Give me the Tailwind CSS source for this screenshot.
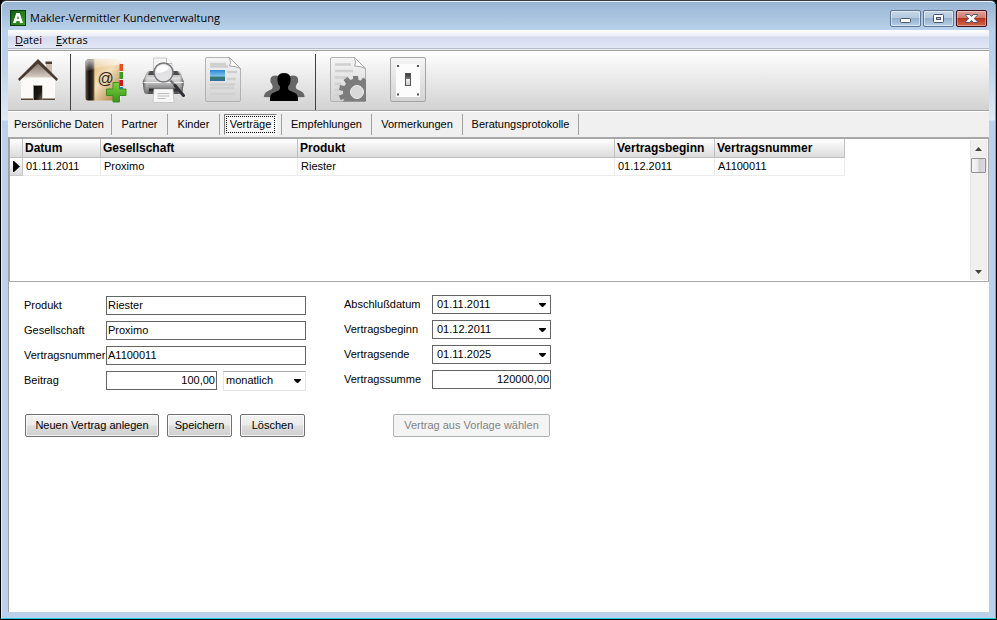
<!DOCTYPE html>
<html lang="de">
<head>
  <meta charset="UTF-8">
  <meta name="viewport" content="width=device-width, initial-scale=1">
  <title>Makler-Vermittler Kundenverwaltung</title>
  <script src="https://cdn.jsdelivr.net/npm/@tailwindcss/browser@4"></script>
</head>

<body class="bg-black font-['Liberation_Sans',Arial,sans-serif] text-[11px] leading-[13px] text-black">

  <div class="min-h-screen flex flex-col rounded-t-md border border-black border-t-[#3a3a44] bg-[linear-gradient(to_bottom,#98b4d2_0px,#b9d1ea_29px,#b9d1ea_60px,#dfeaf7_119px,#b9d1ea_120px)]">
    <div class="grow flex flex-col rounded-t-md border border-t-white/80 border-l-[#dcebf8] border-r-[#2bc8e8] border-b-[#2bc8e8] px-[6px] pb-[6px]">

      <!-- Titelleiste -->
      <header class="h-7 flex items-start justify-between pr-[2px]">
        <div class="flex items-center gap-1 pt-2 pl-[2px]">
          <svg class="size-4" viewBox="0 0 16 16">
            <defs>
              <linearGradient id="app" x1="0" y1="0" x2="1" y2="1"><stop offset="0" stop-color="#0d5c10"/><stop offset="1" stop-color="#3fa02a"/></linearGradient>
            </defs>
            <rect x=".5" y=".5" width="15" height="15" fill="url(#app)" stroke="#0a3d0c"/>
            <path d="M6.3 3h3.4L13 13h-3l-.5-2h-3L6 13H3zM8 5.5 7.1 9h1.8z" fill="#fff" fill-rule="evenodd"/>
          </svg>
          <h1 class="font-['Open_Sans','Noto_Sans',sans-serif] text-[11px] leading-4">Makler-Vermittler Kundenverwaltung</h1>
        </div>
        <div class="flex gap-[2px] pt-2">
          <button aria-label="Minimieren" class="w-[31px] h-[17px] flex items-center justify-center rounded-[2px] border border-[#5f7590] bg-[linear-gradient(to_bottom,#c5d6e8_0%,#b3c8de_48%,#94b1cd_50%,#b5cfe8_100%)] shadow-[inset_0_0_0_1px_rgba(255,255,255,.5)]">
            <svg class="w-[13px] h-[11px]" viewBox="0 0 13 11"><rect x="1.5" y="5.5" width="10" height="4" rx="1" fill="#fff" stroke="#4d5568"/></svg>
          </button>
          <button aria-label="Maximieren" class="w-[31px] h-[17px] flex items-center justify-center rounded-[2px] border border-[#5f7590] bg-[linear-gradient(to_bottom,#c5d6e8_0%,#b3c8de_48%,#94b1cd_50%,#b5cfe8_100%)] shadow-[inset_0_0_0_1px_rgba(255,255,255,.5)]">
            <svg class="w-[13px] h-[11px]" viewBox="0 0 13 11"><rect x="1.5" y="1.5" width="10" height="8" rx="1" fill="#fff" stroke="#4d5568"/><rect x="4.5" y="4.5" width="4" height="2" fill="#a8c0da" stroke="#4d5568"/></svg>
          </button>
          <button aria-label="Schließen" class="w-[31px] h-[17px] flex items-center justify-center rounded-[2px] border border-[#431019] bg-[linear-gradient(to_bottom,#e0a197_0%,#cf7a6c_48%,#b8341c_50%,#d0694a_100%)] shadow-[inset_0_0_0_1px_rgba(255,255,255,.35)]">
            <svg class="w-[13px] h-[11px]" viewBox="0 0 13 11"><path d="M.7 1.500h4l1.800 2 1.800-2h4v1L9.200 5.500l3.100 3v1h-4l-1.800-2-1.800 2h-4v-1l3.100-3-3.100-3z" fill="#fff" stroke="#4d5568"/></svg>
          </button>
        </div>
      </header>

      <!-- Menü -->
      <nav class="h-[19px] flex items-center gap-[14px] px-[7px] pt-px bg-[linear-gradient(to_bottom,#fff_0px,#e9edf7_6px,#d4dbee_7px,#e2e7f6_18px)] border-b border-[#b6bccc] font-['Open_Sans','Noto_Sans',sans-serif] leading-4">
        <a href="#datei"><span class="underline">D</span>atei</a>
        <a href="#extras"><span class="underline">E</span>xtras</a>
      </nav>
      <div class="h-[2px] bg-[#f0f0f0] border-b border-[#a0a0a0]"></div>

      <!-- Werkzeugleiste -->
      <div class="h-[60px] flex items-start pl-[7px] pt-[3px] border-b border-[#a0a0a0] bg-[linear-gradient(to_bottom,#fff_0%,#d2d2d2_100%)]">
        <button aria-label="Startseite">
          <svg class="w-[46px] h-[54px]" viewBox="15 54 46 54">
            <defs>
              <linearGradient id="roof" x1="0" y1="0" x2="0" y2="1"><stop offset="0" stop-color="#75655a"/><stop offset="1" stop-color="#d8cfc7"/></linearGradient>
              <linearGradient id="door" x1="0" y1="0" x2="1" y2="1"><stop offset="0" stop-color="#0c0906"/><stop offset=".6" stop-color="#1e1813"/><stop offset="1" stop-color="#6e655a"/></linearGradient>
            </defs>
            <path d="M46 62h6v13l-6-6z" fill="#c8bdb3"/>
            <path d="M45.500 61.500h6.500v2.500h-6.500z" fill="#4f3f35"/>
            <path d="M38 62 55 79v21H21V79z" fill="#fbfaf6"/>
            <path d="M38 61 54 77.500H22z" fill="url(#roof)"/>
            <path d="M38 59 58 79l-1.500 2L38 63.500 19.500 81 18 79z" fill="#493a31"/>
            <path d="M21 98.500h34v1.500H21z" fill="#5a4636"/>
            <path d="M33 85h9.500v15H33z" fill="#a09486"/>
            <path d="M34 86h8v14h-8z" fill="url(#door)"/>
          </svg>
        </button>
        <div class="w-px h-14 mx-[9px] bg-[#404040]"></div>
        <button aria-label="Neuer Kontakt">
          <svg class="w-[50px] h-[54px]" viewBox="80 54 50 54">
            <defs>
              <linearGradient id="book" x1="0" y1="0" x2="1" y2="1"><stop offset="0" stop-color="#dcae68"/><stop offset=".5" stop-color="#f3e0bd"/><stop offset="1" stop-color="#a9722c"/></linearGradient>
              <linearGradient id="spine"><stop offset="0" stop-color="#5a4e42"/><stop offset=".4" stop-color="#15110e"/><stop offset=".75" stop-color="#2c241b"/><stop offset="1" stop-color="#8f7248"/></linearGradient>
              <linearGradient id="gloss" x1="0" y1="0" x2="0" y2="1"><stop offset="0" stop-color="#fff" stop-opacity=".7"/><stop offset="1" stop-color="#fff" stop-opacity="0"/></linearGradient>
              <linearGradient id="plus" x1="0" y1="0" x2="0" y2="1"><stop offset="0" stop-color="#7fd23e"/><stop offset="1" stop-color="#36941a"/></linearGradient>
            </defs>
            <path d="M117 62h4v38h-4z" fill="#eee"/>
            <path d="M119 64h4v7h-4z" fill="#e8501c"/>
            <path d="M119 72h4v7h-4z" fill="#3a9a22"/>
            <path d="M119 80h4v6h-4z" fill="#d4141c"/>
            <path d="M119 87h4v6h-4z" fill="#2a78c8"/>
            <rect x="85.500" y="59.500" width="34" height="41" rx="2.500" fill="url(#book)"/>
            <path d="M88 59.500h6.500v41H88q-2.500 0-2.500-2.500V62q0-2.500 2.500-2.500z" fill="url(#spine)"/>
            <path d="M88 59.500h29q2.500 0 2.500 2.500v3q-17 0-34 7V62q0-2.500 2.500-2.500z" fill="url(#gloss)"/>
            <text x="97.500" y="84" font-size="16" font-family="Liberation Sans" fill="#2d251b">@</text>
            <path d="M113 82.500h6.500V89h6.500v6.500h-6.500v6.500H113v-6.500h-6.500V89h6.500z" fill="url(#plus)" stroke="#3b8f20"/>
          </svg>
        </button>
        <button aria-label="Druckvorschau" class="ml-[9px]">
          <svg class="w-[50px] h-[54px]" viewBox="139 54 50 54">
            <defs>
              <linearGradient id="printer" x1="0" y1="0" x2="0" y2="1"><stop offset="0" stop-color="#8a8a8a"/><stop offset=".3" stop-color="#dedede"/><stop offset=".5" stop-color="#c2c2c2"/><stop offset=".8" stop-color="#7a7a7a"/><stop offset="1" stop-color="#4a4a4a"/></linearGradient>
              <linearGradient id="tray"><stop offset="0" stop-color="#444"/><stop offset=".15" stop-color="#fff" stop-opacity="0"/><stop offset=".85" stop-color="#fff" stop-opacity="0"/><stop offset="1" stop-color="#444"/></linearGradient>
            </defs>
            <path d="M153.500 76V58h13l5.500 5.500V76z" fill="#f4f4f4" stroke="#ccc"/>
            <path d="M166.500 58v5.500h5.500" fill="#fff" stroke="#bbb"/>
            <path d="M150 71h27q2.500 0 3.500 2l3 8q.5 1.500 0 3.500l-1 7q-.5 2.500-3 2.500H147q-2.500 0-3-2.500l-1-7q-.5-2 0-3.500l3.500-8q1-2 3.500-2z" fill="url(#printer)"/>
            <path d="M150 71h27q2.500 0 3.500 2l3 8q.5 1.500 0 3.500l-1 7q-.5 2.500-3 2.500H147q-2.500 0-3-2.500l-1-7q-.5-2 0-3.500l3.500-8q1-2 3.500-2z" fill="url(#tray)"/>
            <path d="M150 71h4v4h-6zM173 71h4l3 4h-7z" fill="#4c4c4c"/>
            <path d="M143.500 82.500h40" stroke="#f4f4f4"/>
            <path d="M149 88.500h29v3h-29z" fill="#2f2f2f"/>
            <path d="M154 89h19l1 13.500h-21z" fill="#f7f7f7" stroke="#bbb" stroke-width=".7"/>
            <path d="M157.500 93.500h12M157.500 96h12M157.500 98.500h8" stroke="#bbb"/>
            <path d="m170.500 80.500 6 6.500" stroke="#777" stroke-width="2.500"/>
            <path d="m175 85.500 8.500 10" stroke="#303036" stroke-width="3" stroke-linecap="round"/>
            <circle cx="163.500" cy="72.500" r="9.500" fill="#e4e4e7" fill-opacity=".94" stroke="#77777b" stroke-width="1.500"/>
            <path d="M156 72.500a7.500 7.500 0 0 1 13-5q-3 6-13 5z" fill="#fff"/>
          </svg>
        </button>
        <button aria-label="Dokument" class="ml-3">
          <svg class="w-[44px] h-[54px]" viewBox="201 54 44 54">
            <defs>
              <linearGradient id="page" x1="0" y1="0" x2="0" y2="1"><stop offset="0" stop-color="#f5f5f5"/><stop offset="1" stop-color="#d3d3d3"/></linearGradient>
              <linearGradient id="sky" x1="0" y1="0" x2="0" y2="1"><stop offset="0" stop-color="#2c86d6"/><stop offset=".55" stop-color="#7fc2ee"/><stop offset=".65" stop-color="#3a7a68"/><stop offset="1" stop-color="#2c70a4"/></linearGradient>
            </defs>
            <path d="M207 57.500h22.500l11 11V100q0 1.500-1.500 1.500H207q-1.500 0-1.500-1.500V59q0-1.500 1.500-1.500z" fill="url(#page)" stroke="#b2b2b2"/>
            <path d="M210 64h16M210 66.500h18M227 72h10M227 79h9M210 84.500h25M210 88h24M210 94h25" stroke="#d0d0d0" stroke-width="2.500"/>
            <path d="M229.500 57.500q2 6 0 8.500 6 0 11 2.500z" fill="#fff" stroke="#a5a5a5" stroke-linejoin="round"/>
            <path d="M210 70h15v11h-15z" fill="url(#sky)"/>
          </svg>
        </button>
        <button aria-label="Kunden" class="ml-[14px]">
          <svg class="w-[50px] h-[54px]" viewBox="259 54 50 54">
            <defs><radialGradient id="schatten"><stop offset="0" stop-color="#333"/><stop offset="1" stop-color="#999" stop-opacity="0"/></radialGradient></defs>
            <ellipse cx="284" cy="96.500" rx="23" ry="3" fill="url(#schatten)"/>
            <path d="M264 97q0-4 3-5.500l5-2.500q1.500-2 0-4.500-2.500-3-1.500-6 1-3 5-3t5 3L283 97z" fill="#666"/>
            <path d="M304.500 97q0-4-3-5.500l-5-2.500q-1.500-2 0-4.500 2.500-3 1.500-6-1-3-5-3t-5 3L285 97z" fill="#666"/>
            <path d="M270 101q-.5-6.500 3-8l5.500-2.500q2-1 1.500-4-2.500-2-2.500-5-.5-4 .5-5.500 1.500-3 6-3t6 3q1 1.500.5 5.500 0 3-2.500 5-.5 3 1.500 4l5.500 2.500q3.500 1.500 3 8z" fill="#000"/>
          </svg>
        </button>
        <div class="w-px h-14 ml-[6px] bg-[#404040]"></div>
        <button aria-label="Dokument bearbeiten" class="ml-[10px]">
          <svg class="w-[44px] h-[54px]" viewBox="326 54 44 54">
            <path d="M332 57.500h22.500l11 11V100q0 1.500-1.500 1.500H332q-1.500 0-1.500-1.500V59q0-1.500 1.500-1.500z" fill="url(#page)" stroke="#b2b2b2"/>
            <path d="M335 64.500h16M335 71h18M335 77.500h13M335 84h6M335 90h5M335 95h5" stroke="#d0d0d0" stroke-width="2.500"/>
            <path d="M354.500 57.500q2 6 0 8.500 6 0 11 2.500z" fill="#fff" stroke="#a5a5a5" stroke-linejoin="round"/>
            <path d="M366 79.500v22h-23l1.500-2.500-4 1-1.500-4.500 4-1.500v-3l-4-1 1-5 4.500 1 1.500-2.500-2.500-3.500 4-3 3 3 2.500-1V76h5l.5 4 2.500.5 2-3z" fill="#7c7c7c"/>
            <circle cx="357" cy="92" r="6.500" fill="#d9d9d9" stroke="#eee"/>
          </svg>
        </button>
        <button aria-label="Einstellungen" class="ml-4">
          <svg class="w-[44px] h-[54px]" viewBox="386 54 44 54">
            <defs><linearGradient id="schalter" x1="0" y1="0" x2="0" y2="1"><stop offset="0" stop-color="#333"/><stop offset=".45" stop-color="#777"/><stop offset=".5" stop-color="#eee"/><stop offset="1" stop-color="#ccc"/></linearGradient></defs>
            <rect x="390.500" y="57.500" width="35" height="44" rx="1.500" fill="url(#page)" stroke="#a5a5a5"/>
            <path d="M396 64h24v33h-24z" fill="#fcfcfc"/>
            <path d="M397 65h2v2h-2zM417 65h2v2h-2zM397 93.500h2v2h-2zM417 93.500h2v2h-2z" fill="#555"/>
            <rect x="405.500" y="73.500" width="5" height="12" fill="url(#schalter)" stroke="#555"/>
          </svg>
        </button>
      </div>

      <!-- Register -->
      <nav class="h-[26px] flex items-start pt-[2px] bg-[#f0f0f0] border-t border-white">
        <button class="w-[104px] h-[21px] pl-[6px] text-left border-r border-[#a0a0a0] whitespace-nowrap">Persönliche Daten</button>
        <button class="w-14 h-[21px] border-r border-[#a0a0a0]">Partner</button>
        <button class="w-[52px] h-[21px] border-r border-[#a0a0a0]">Kinder</button>
        <div class="w-[62px] h-[21px] px-1 border-r border-[#a0a0a0]">
          <button class="w-full h-[21px] p-px border border-t-[#808080] border-l-[#808080] border-b-white border-r-white bg-[#f8f8f8]">
            <span class="flex h-full items-center justify-center border border-dotted border-black">Verträge</span>
          </button>
        </div>
        <button class="w-[90px] h-[21px] border-r border-[#a0a0a0]">Empfehlungen</button>
        <button class="w-[91px] h-[21px] border-r border-[#a0a0a0]">Vormerkungen</button>
        <button class="w-[116px] h-[21px] border-r border-[#a0a0a0]">Beratungsprotokolle</button>
      </nav>

      <main class="grow bg-white border-l border-[#a0a0a0]">

        <!-- Vertragsliste -->
        <div class="h-[145px] flex justify-between border-y border-t-2 border-r border-l border-[#a8a8a8] pr-px">
          <table class="table-fixed w-[835px] self-start border-separate border-spacing-0 text-left">
            <thead>
              <tr class="h-[19px] bg-[linear-gradient(to_bottom,#fff_0%,#dadada_100%)] text-[12px] font-bold">
                <th class="w-[13px] border-r border-b border-[#c0c0c0]"></th>
                <th class="w-[78px] pl-[2px] pt-px border-r border-b border-[#c0c0c0]">Datum</th>
                <th class="w-[197px] pl-[2px] pt-px border-r border-b border-[#c0c0c0]">Gesellschaft</th>
                <th class="w-[317px] pl-[2px] pt-px border-r border-b border-[#c0c0c0]">Produkt</th>
                <th class="w-[100px] pl-[2px] pt-px border-r border-b border-[#c0c0c0]">Vertragsbeginn</th>
                <th class="pl-[2px] pt-px border-r border-b border-[#c0c0c0]">Vertragsnummer</th>
              </tr>
            </thead>
            <tbody>
              <tr class="h-[18px]">
                <td class="border-r border-b border-[#c8c8c8] bg-[linear-gradient(to_bottom,#fff_0%,#dadada_100%)]">
                  <svg class="w-[7px] h-[11px] ml-[3px]" viewBox="0 0 7 11"><path d="M0 0h1l6 5.500L1 11H0z"/></svg>
                </td>
                <td class="pl-[3px] border-r border-b border-[#ececec]">01.11.2011</td>
                <td class="pl-[3px] border-r border-b border-[#ececec]">Proximo</td>
                <td class="pl-[3px] border-r border-b border-[#ececec]">Riester</td>
                <td class="pl-[3px] border-r border-b border-[#ececec]">01.12.2011</td>
                <td class="pl-[3px] border-r border-b border-[#ececec]">A1100011</td>
              </tr>
            </tbody>
          </table>
          <div class="w-[17px] my-px flex flex-col items-center bg-[#f0f0f0] border-x border-[#e6e6e6]">
            <button aria-label="Nach oben" class="h-[18px] w-full flex items-center justify-center"><svg class="w-[7px] h-1" viewBox="0 0 7 4"><path d="M0 4 3.500 0 7 4z" fill="#444"/></svg></button>
            <div class="w-[15px] h-[15px] rounded-[1px] border border-[#929292] bg-[linear-gradient(to_right,#f6f6f6_0%,#e8e8ea_48%,#cfcfd3_52%,#dcdce0_100%)]"></div>
            <button aria-label="Nach unten" class="h-[17px] w-full mt-auto flex items-center justify-center"><svg class="w-[7px] h-1" viewBox="0 0 7 4"><path d="M0 0h7L3.500 4z" fill="#444"/></svg></button>
          </div>
        </div>

        <!-- Vertragsdaten -->
        <form class="pl-[15px]">
          <div class="flex gap-[38px] pt-[13px]">
            <div class="grid grid-cols-[82px_200px] auto-rows-[19px] gap-y-[6px] items-center pt-px">
              <label for="produkt">Produkt</label>
              <input id="produkt" type="text" value="Riester" class="w-full h-[19px] px-px pb-px border border-[#646464] bg-white">
              <label for="gesellschaft">Gesellschaft</label>
              <input id="gesellschaft" type="text" value="Proximo" class="w-full h-[19px] px-px pb-px border border-[#646464] bg-white">
              <label for="nummer">Vertragsnummer</label>
              <input id="nummer" type="text" value="A1100011" class="w-full h-[19px] px-px pb-px border border-[#646464] bg-white">
              <label for="beitrag">Beitrag</label>
              <div class="flex gap-[6px]">
                <input id="beitrag" type="text" value="100,00" class="w-[111px] h-[19px] px-px pb-px text-right border border-[#646464] bg-white">
                <div class="relative grow">
                  <select aria-label="Zahlweise" class="w-full h-5 pl-[2px] appearance-none border border-[#e2e3ea] border-t-[#abadb3] bg-white">
                    <option>monatlich</option>
                  </select>
                  <svg class="absolute right-[5px] top-2 w-[7px] h-1 pointer-events-none" viewBox="0 0 7 4"><path d="M0 0h7v1L4 4H3L0 1z"/></svg>
                </div>
              </div>
            </div>

            <div class="grid grid-cols-[88px_119px] auto-rows-[19px] gap-y-[6px] items-center">
              <label for="abschluss">Abschlußdatum</label>
              <div class="relative">
                <select id="abschluss" class="w-full h-[19px] pl-1 pb-px appearance-none border border-[#646464] bg-white"><option>01.11.2011</option></select>
                <svg class="absolute right-[5px] top-2 w-[7px] h-1 pointer-events-none" viewBox="0 0 7 4"><path d="M0 0h7v1L4 4H3L0 1z"/></svg>
              </div>
              <label for="beginn">Vertragsbeginn</label>
              <div class="relative">
                <select id="beginn" class="w-full h-[19px] pl-1 pb-px appearance-none border border-[#646464] bg-white"><option>01.12.2011</option></select>
                <svg class="absolute right-[5px] top-2 w-[7px] h-1 pointer-events-none" viewBox="0 0 7 4"><path d="M0 0h7v1L4 4H3L0 1z"/></svg>
              </div>
              <label for="ende">Vertragsende</label>
              <div class="relative">
                <select id="ende" class="w-full h-[19px] pl-1 pb-px appearance-none border border-[#646464] bg-white"><option>01.11.2025</option></select>
                <svg class="absolute right-[5px] top-2 w-[7px] h-1 pointer-events-none" viewBox="0 0 7 4"><path d="M0 0h7v1L4 4H3L0 1z"/></svg>
              </div>
              <label for="summe">Vertragssumme</label>
              <input id="summe" type="text" value="120000,00" class="w-full h-[19px] px-px pb-px text-right border border-[#646464] bg-white">
            </div>
          </div>

          <div class="flex gap-2 pt-6 pl-px">
            <button type="button" class="w-[134px] h-[23px] rounded-[2px] border border-[#707070] bg-[linear-gradient(to_bottom,#f2f2f2_0%,#ebebeb_49%,#dddddd_51%,#cfcfcf_100%)] shadow-[inset_0_0_0_1px_rgba(255,255,255,.7)]">Neuen Vertrag anlegen</button>
            <button type="button" class="w-[65px] h-[23px] rounded-[2px] border border-[#707070] bg-[linear-gradient(to_bottom,#f2f2f2_0%,#ebebeb_49%,#dddddd_51%,#cfcfcf_100%)] shadow-[inset_0_0_0_1px_rgba(255,255,255,.7)]">Speichern</button>
            <button type="button" class="w-[65px] h-[23px] rounded-[2px] border border-[#707070] bg-[linear-gradient(to_bottom,#f2f2f2_0%,#ebebeb_49%,#dddddd_51%,#cfcfcf_100%)] shadow-[inset_0_0_0_1px_rgba(255,255,255,.7)]">Löschen</button>
            <button type="button" disabled class="w-[157px] h-[23px] ml-20 rounded-[2px] border border-[#adb2b5] bg-[#f4f4f4] text-[#838383]">Vertrag aus Vorlage wählen</button>
          </div>
        </form>
      </main>
    </div>
  </div>

</body>
</html>
